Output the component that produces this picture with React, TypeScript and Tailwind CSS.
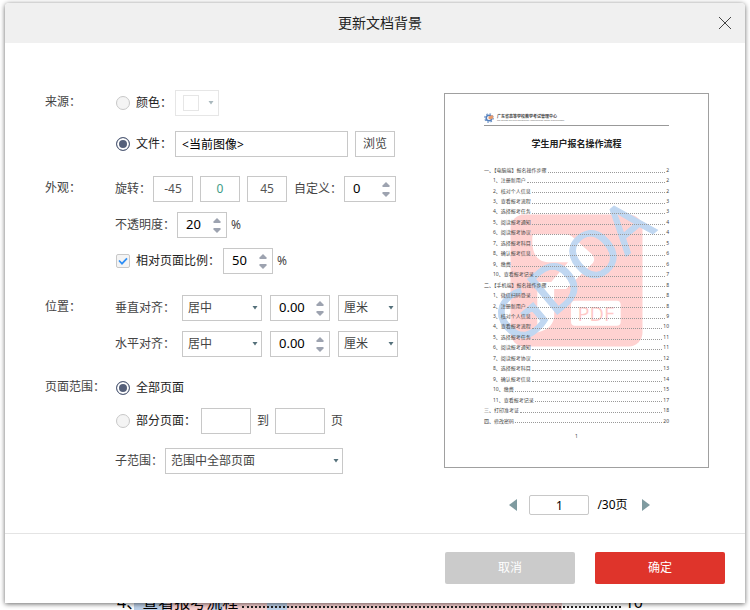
import { useState } from 'react';
import type { ReactNode } from 'react';

interface TocItem {
  label: string;
  page: number;
  top?: boolean;
}

const TOC: TocItem[] = [
  { label: '一、【电脑端】报名操作步骤', page: 2, top: true },
  { label: '1、注册新用户', page: 2 },
  { label: '2、核对个人信息', page: 2 },
  { label: '3、查看报考流程', page: 3 },
  { label: '4、选择报考任务', page: 3 },
  { label: '5、阅读报考通知', page: 4 },
  { label: '6、阅读报考协议', page: 4 },
  { label: '7、选择报考科目', page: 5 },
  { label: '8、确认报考信息', page: 6 },
  { label: '9、缴费', page: 6 },
  { label: '10、查看报考记录', page: 7 },
  { label: '二、【手机端】报名操作步骤', page: 8, top: true },
  { label: '1、微信扫码登录', page: 8 },
  { label: '2、注册新用户', page: 8 },
  { label: '3、核对个人信息', page: 9 },
  { label: '4、查看报考流程', page: 10 },
  { label: '5、选择报考任务', page: 11 },
  { label: '6、阅读报考通知', page: 11 },
  { label: '7、阅读报考协议', page: 12 },
  { label: '8、选择报考科目', page: 13 },
  { label: '9、确认报考信息', page: 14 },
  { label: '10、缴费', page: 15 },
  { label: '11、查看报考记录', page: 17 },
  { label: '三、打印准考证', page: 18, top: true },
  { label: '四、修改密码', page: 20, top: true },
];

const box = 'h-[26px] border border-[#c8c8c8] bg-white';

function Radio({ id, name, checked, onChange }: { id: string; name: string; checked: boolean; onChange: () => void }) {
  return (
    <input
      type="radio"
      id={id}
      name={name}
      checked={checked}
      onChange={onChange}
      className="mr-1.5 ml-px size-3.5 shrink-0 appearance-none rounded-full border border-[#c8c8c8] bg-[#f4f4f4] checked:border-[#55607a] checked:bg-[#55607a] checked:shadow-[inset_0_0_0_2px_#fff]"
    />
  );
}

interface SpinnerProps {
  id: string;
  label?: string;
  value: number;
  digits?: number;
  step?: number;
  className: string;
  onChange: (value: number) => void;
}

function Spinner({ id, label, value, digits = 0, step = 1, className, onChange }: SpinnerProps) {
  return (
    <div className={`${box} flex ${className}`}>
      <input
        id={id}
        aria-label={label}
        value={value.toFixed(digits)}
        onChange={(e) => onChange(Number(e.target.value) || 0)}
        className="w-0 flex-1 pl-2 text-[13px] text-black outline-none"
      />
      <div className="flex w-[18px] flex-col justify-between py-1">
        <button type="button" aria-label="增加" onClick={() => onChange(value + step)} className="flex h-1.5 items-center justify-center">
          <svg width="8" height="5" viewBox="0 0 8 5" fill="#9da3b0">
            <path d="M4 0L7.5 3.6V5H.5V3.6z" />
          </svg>
        </button>
        <button type="button" aria-label="减少" onClick={() => onChange(value - step)} className="flex h-1.5 items-center justify-center">
          <svg width="8" height="5" viewBox="0 0 8 5" fill="#9da3b0">
            <path d="M4 5L.5 1.4V0h7v1.4z" />
          </svg>
        </button>
      </div>
    </div>
  );
}

interface DropdownProps {
  id: string;
  label?: string;
  options: string[];
  className: string;
}

function Dropdown({ id, label, options, className }: DropdownProps) {
  return (
    <div className={`relative ${className}`}>
      <select id={id} aria-label={label} className={`${box} w-full appearance-none pl-[5px] outline-none`}>
        {options.map(option => (
          <option key={option}>{option}</option>
        ))}
      </select>
      <svg className="pointer-events-none absolute top-[11px] right-1" width="6" height="4" viewBox="0 0 6 4" fill="#54707a">
        <path d="M.5 0h5L3 3.5z" />
      </svg>
    </div>
  );
}

function Section({ title, children }: { title: string; children: ReactNode }) {
  return (
    <section className="flex">
      <h2 className="w-[70px] shrink-0 leading-6">{title}</h2>
      <div className="flex min-w-0 flex-1 flex-col">{children}</div>
    </section>
  );
}

// 页面上的水印：PDF 图标 + 斜排文字
function Watermark() {
  return (
    <svg className="absolute inset-0 h-full w-full" viewBox="0 0 265 375">
      <rect x="66" y="121" width="133" height="133" rx="14" fill="#ffd2d1" />
      <path
        d="M91 141h28c5 0 8 1 11 4l18 16c3 3 3 7 0 10l-26 25h-12v26c0 9-5 15-17 18v-51h14l17-20H104c-10 0-16-8-16-20v-5c0-2 1-3 3-3z"
        fill="#fff"
      />
      <rect x="127" y="208" width="50" height="25" rx="4" fill="#fff" />
      <text x="152" y="228" textAnchor="middle" fontSize="20" fill="#ffc9c8" fontFamily="'Open Sans', sans-serif">
        PDF
      </text>
      <text
        x="72"
        y="256"
        transform="rotate(-40 72 256)"
        fontSize="65"
        fill="#c0d7f1"
        stroke="#c0d7f1"
        strokeWidth="1"
        fontFamily="'Noto Sans', sans-serif"
      >
        GDOA
      </text>
    </svg>
  );
}

function PagePreview() {
  return (
    <div className="relative border border-[#a0a0a0] bg-white px-[39px] pt-[17px] pb-[23px] text-[5px] text-[#444]">
      <Watermark />
      <div className="relative">
        <div className="flex h-[15px] items-center gap-[3px] border-b border-[#999]">
          <svg width="10" height="10" viewBox="0 0 10 10">
            <circle cx="5" cy="5" r="2.8" fill="none" stroke="#5480bd" strokeWidth="1.6" />
            <circle cx="5" cy="5" r="4.2" fill="none" stroke="#6e94c8" strokeWidth="1.2" strokeDasharray="1.6 1.7" />
            <path d="M4.5 3.5L8.5 2 9.5 5 6.5 6.5 4.5 5.8z" fill="#e79a6b" />
          </svg>
          <div className="text-[4px] leading-none">
            <p className="font-bold">广东省高等学校教学考试管理中心</p>
            <p className="mt-px text-[2px] text-[#666]">The College Curricula Registration Administration Center of Guangdong</p>
          </div>
        </div>
        <h3 className="mt-2.5 text-center text-[9px] leading-4 font-bold text-[#222]">学生用户报名操作流程</h3>
        <ul className="mt-3.5 flex h-[259px] flex-col justify-between">
          {TOC.map((item, index) => (
            <li key={index} className={`flex h-2 items-center ${item.top ? '' : 'pl-[9px]'}`}>
              <span>{item.label}</span>
              <span className="mx-px mt-1 flex-1 border-b border-dotted border-[#999]" />
              <span>{item.page}</span>
            </li>
          ))}
        </ul>
        <p className="mt-[3px] text-center leading-4">1</p>
      </div>
    </div>
  );
}

export default function App() {
  const [source, setSource] = useState('file');
  const [range, setRange] = useState('all');
  const [rotation, setRotation] = useState(0);
  const [opacity, setOpacity] = useState(20);
  const [relative, setRelative] = useState(true);
  const [scale, setScale] = useState(50);
  const [offsetY, setOffsetY] = useState(0);
  const [offsetX, setOffsetX] = useState(0);
  const [page, setPage] = useState(1);
  const [file, setFile] = useState('<当前图像>');

  return (
    <div className="relative min-h-screen overflow-hidden bg-white px-[5px] pt-[3px] pb-[7px] font-['Noto_Sans','Noto_Sans_CJK_SC',sans-serif] text-xs text-[#444]">
      {/* 对话框后面的文档 */}
      <div className="absolute inset-x-0 bottom-0 flex h-4 items-center pr-[107px] pl-[117px] text-base leading-4 text-black">
        <div className="absolute inset-y-0 right-[188px] left-[134px] flex bg-[#f6cfcf]">
          <div className="w-[33px] bg-[#bcd0e8]" />
          <div className="ml-[46px] w-2.5 bg-[#bcd0e8]" />
          <div className="ml-11 w-5 bg-[#bcd0e8]" />
        </div>
        <span className="relative">4、查看报考流程</span>
        <span className="relative mx-1 mt-2.5 flex-1 border-b-2 border-dotted border-[#222]" />
        <span className="relative">10</span>
      </div>

      <div className="relative rounded-t-sm bg-white shadow-[0_1px_5px_rgba(0,0,0,0.6)]">
        <header className="relative flex h-10 items-center justify-center rounded-t-sm bg-[#f0f0f0] pl-2.5">
          <h1 className="text-sm text-[#222]">更新文档背景</h1>
          <button type="button" aria-label="关闭" className="absolute right-3.5">
            <svg width="12" height="12" viewBox="0 0 12 12" stroke="#444" strokeWidth="1">
              <path d="M0 0l12 12M12 0L0 12" />
            </svg>
          </button>
        </header>

        <div className="flex gap-[46px] pr-9 pb-[18px] pl-10">
          <form className="flex min-w-0 flex-1 flex-col pt-[47px]">
            <Section title="来源：">
              <div className="flex items-center">
                <Radio id="source-color" name="source" checked={source === 'color'} onChange={() => setSource('color')} />
                <label htmlFor="source-color" className="text-[#222]">颜色：</label>
                <button type="button" aria-label="选择颜色" className="ml-[3px] flex h-[26px] w-11 items-center justify-between border border-[#e6e6e6] pr-1 pl-[7px]">
                  <span className="size-4 border border-[#e6e6e6]" />
                  <svg width="6" height="4" viewBox="0 0 6 4" fill="#a9b8bd">
                    <path d="M.5 0h5L3 3.5z" />
                  </svg>
                </button>
              </div>
              <div className="mt-[15px] flex items-center pr-[3px]">
                <Radio id="source-file" name="source" checked={source === 'file'} onChange={() => setSource('file')} />
                <label htmlFor="source-file" className="text-[#222]">文件：</label>
                <input
                  aria-label="文件路径"
                  value={file}
                  onChange={(e) => setFile(e.target.value)}
                  className={`${box} ml-[3px] w-0 flex-1 px-1.5 text-black outline-none`}
                />
                <button type="button" className={`${box} ml-[7px] w-10`}>浏览</button>
              </div>
            </Section>

            <div className="mt-[19px]">
              <Section title="外观：">
                <div className="flex items-center">
                  <span>旋转：</span>
                  <div className="ml-0.5 flex gap-[7px]">
                    {[-45, 0, 45].map(angle => (
                      <button
                        key={angle}
                        type="button"
                        onClick={() => setRotation(angle)}
                        className={`${box} w-10 ${rotation === angle ? 'text-[#3f9c86]' : 'text-[#555]'}`}
                      >
                        {angle}
                      </button>
                    ))}
                  </div>
                  <label htmlFor="rotation" className="ml-[7px]">自定义：</label>
                  <Spinner id="rotation" value={rotation} onChange={setRotation} className="ml-0.5 w-[52px]" />
                </div>
                <div className="mt-2.5 flex items-center">
                  <label htmlFor="opacity">不透明度：</label>
                  <Spinner id="opacity" value={opacity} onChange={setOpacity} className="ml-0.5 w-[50px]" />
                  <span className="ml-1">%</span>
                </div>
                <div className="mt-2.5 flex items-center">
                  <span className="relative mr-1.5 ml-px flex size-3.5">
                    <input
                      type="checkbox"
                      id="relative"
                      checked={relative}
                      onChange={(e) => setRelative(e.target.checked)}
                      className="peer size-3.5 appearance-none rounded-xs border border-[#c8c8c8] bg-[#f4f4f4]"
                    />
                    <svg className="pointer-events-none absolute inset-0 hidden peer-checked:block" width="14" height="14" viewBox="0 0 14 14" fill="none" stroke="#2f8ff5" strokeWidth="1.7">
                      <path d="M3 6.5l3 3.2 5-5.4" />
                    </svg>
                  </span>
                  <label htmlFor="relative" className="text-[#222]">相对页面比例：</label>
                  <Spinner id="scale" label="比例" value={scale} onChange={setScale} className="ml-[3px] w-[50px]" />
                  <span className="ml-1">%</span>
                </div>
              </Section>
            </div>

            <div className="mt-[21px]">
              <Section title="位置：">
                <div className="flex items-center">
                  <label htmlFor="align-y">垂直对齐：</label>
                  <Dropdown id="align-y" options={['居中', '顶端', '底端']} className="ml-[7px] w-20" />
                  <Spinner id="offset-y" label="垂直偏移" value={offsetY} digits={2} step={0.1} onChange={setOffsetY} className="ml-2 w-[60px]" />
                  <Dropdown id="unit-y" label="垂直单位" options={['厘米', '英寸', '点']} className="ml-2 w-[60px]" />
                </div>
                <div className="mt-2.5 flex items-center">
                  <label htmlFor="align-x">水平对齐：</label>
                  <Dropdown id="align-x" options={['居中', '靠左', '靠右']} className="ml-[7px] w-20" />
                  <Spinner id="offset-x" label="水平偏移" value={offsetX} digits={2} step={0.1} onChange={setOffsetX} className="ml-2 w-[60px]" />
                  <Dropdown id="unit-x" label="水平单位" options={['厘米', '英寸', '点']} className="ml-2 w-[60px]" />
                </div>
              </Section>
            </div>

            <div className="mt-[18px]">
              <Section title="页面范围：">
                <div className="flex h-[26px] items-center">
                  <Radio id="range-all" name="range" checked={range === 'all'} onChange={() => setRange('all')} />
                  <label htmlFor="range-all" className="text-[#222]">全部页面</label>
                </div>
                <div className="mt-[7px] flex items-center">
                  <Radio id="range-part" name="range" checked={range === 'part'} onChange={() => setRange('part')} />
                  <label htmlFor="range-part" className="text-[#222]">部分页面：</label>
                  <input aria-label="起始页" className={`${box} ml-[5px] w-[50px] px-1.5 outline-none`} />
                  <label htmlFor="range-end" className="mx-1.5">到</label>
                  <input id="range-end" className={`${box} w-[50px] px-1.5 outline-none`} />
                  <span className="ml-1.5">页</span>
                </div>
                <div className="mt-3.5 flex items-center">
                  <label htmlFor="subset">子范围：</label>
                  <Dropdown id="subset" options={['范围中全部页面', '仅奇数页', '仅偶数页']} className="ml-0.5 w-[178px]" />
                </div>
              </Section>
            </div>
          </form>

          <div className="w-[265px] shrink-0 pt-[50px]">
            <PagePreview />
            <div className="mt-[27px] flex items-center justify-center pl-1.5 text-black">
              <button type="button" aria-label="上一页" onClick={() => setPage(Math.max(1, page - 1))}>
                <svg width="8" height="12" viewBox="0 0 8 12" fill="#7f9ba0">
                  <path d="M8 0v12L0 6z" />
                </svg>
              </button>
              <input
                aria-label="页码"
                value={page}
                onChange={(e) => setPage(Number(e.target.value) || 1)}
                className="mr-2 ml-3 h-5 w-[60px] rounded-xs border border-[#c8c8c8] text-center outline-none"
              />
              <span>/30页</span>
              <button type="button" aria-label="下一页" onClick={() => setPage(Math.min(30, page + 1))} className="ml-3.5">
                <svg width="8" height="12" viewBox="0 0 8 12" fill="#7f9ba0">
                  <path d="M0 0v12l8-6z" />
                </svg>
              </button>
            </div>
          </div>
        </div>

        <footer className="flex justify-end gap-5 border-t border-[#e4e4e4] px-5 pt-[18px] pb-[19px] text-white">
          <button type="button" className="h-8 w-[130px] rounded-xs bg-[#cbcbcb]">取消</button>
          <button type="button" className="h-8 w-[130px] rounded-xs bg-[#df342b]">确定</button>
        </footer>
      </div>
    </div>
  );
}
